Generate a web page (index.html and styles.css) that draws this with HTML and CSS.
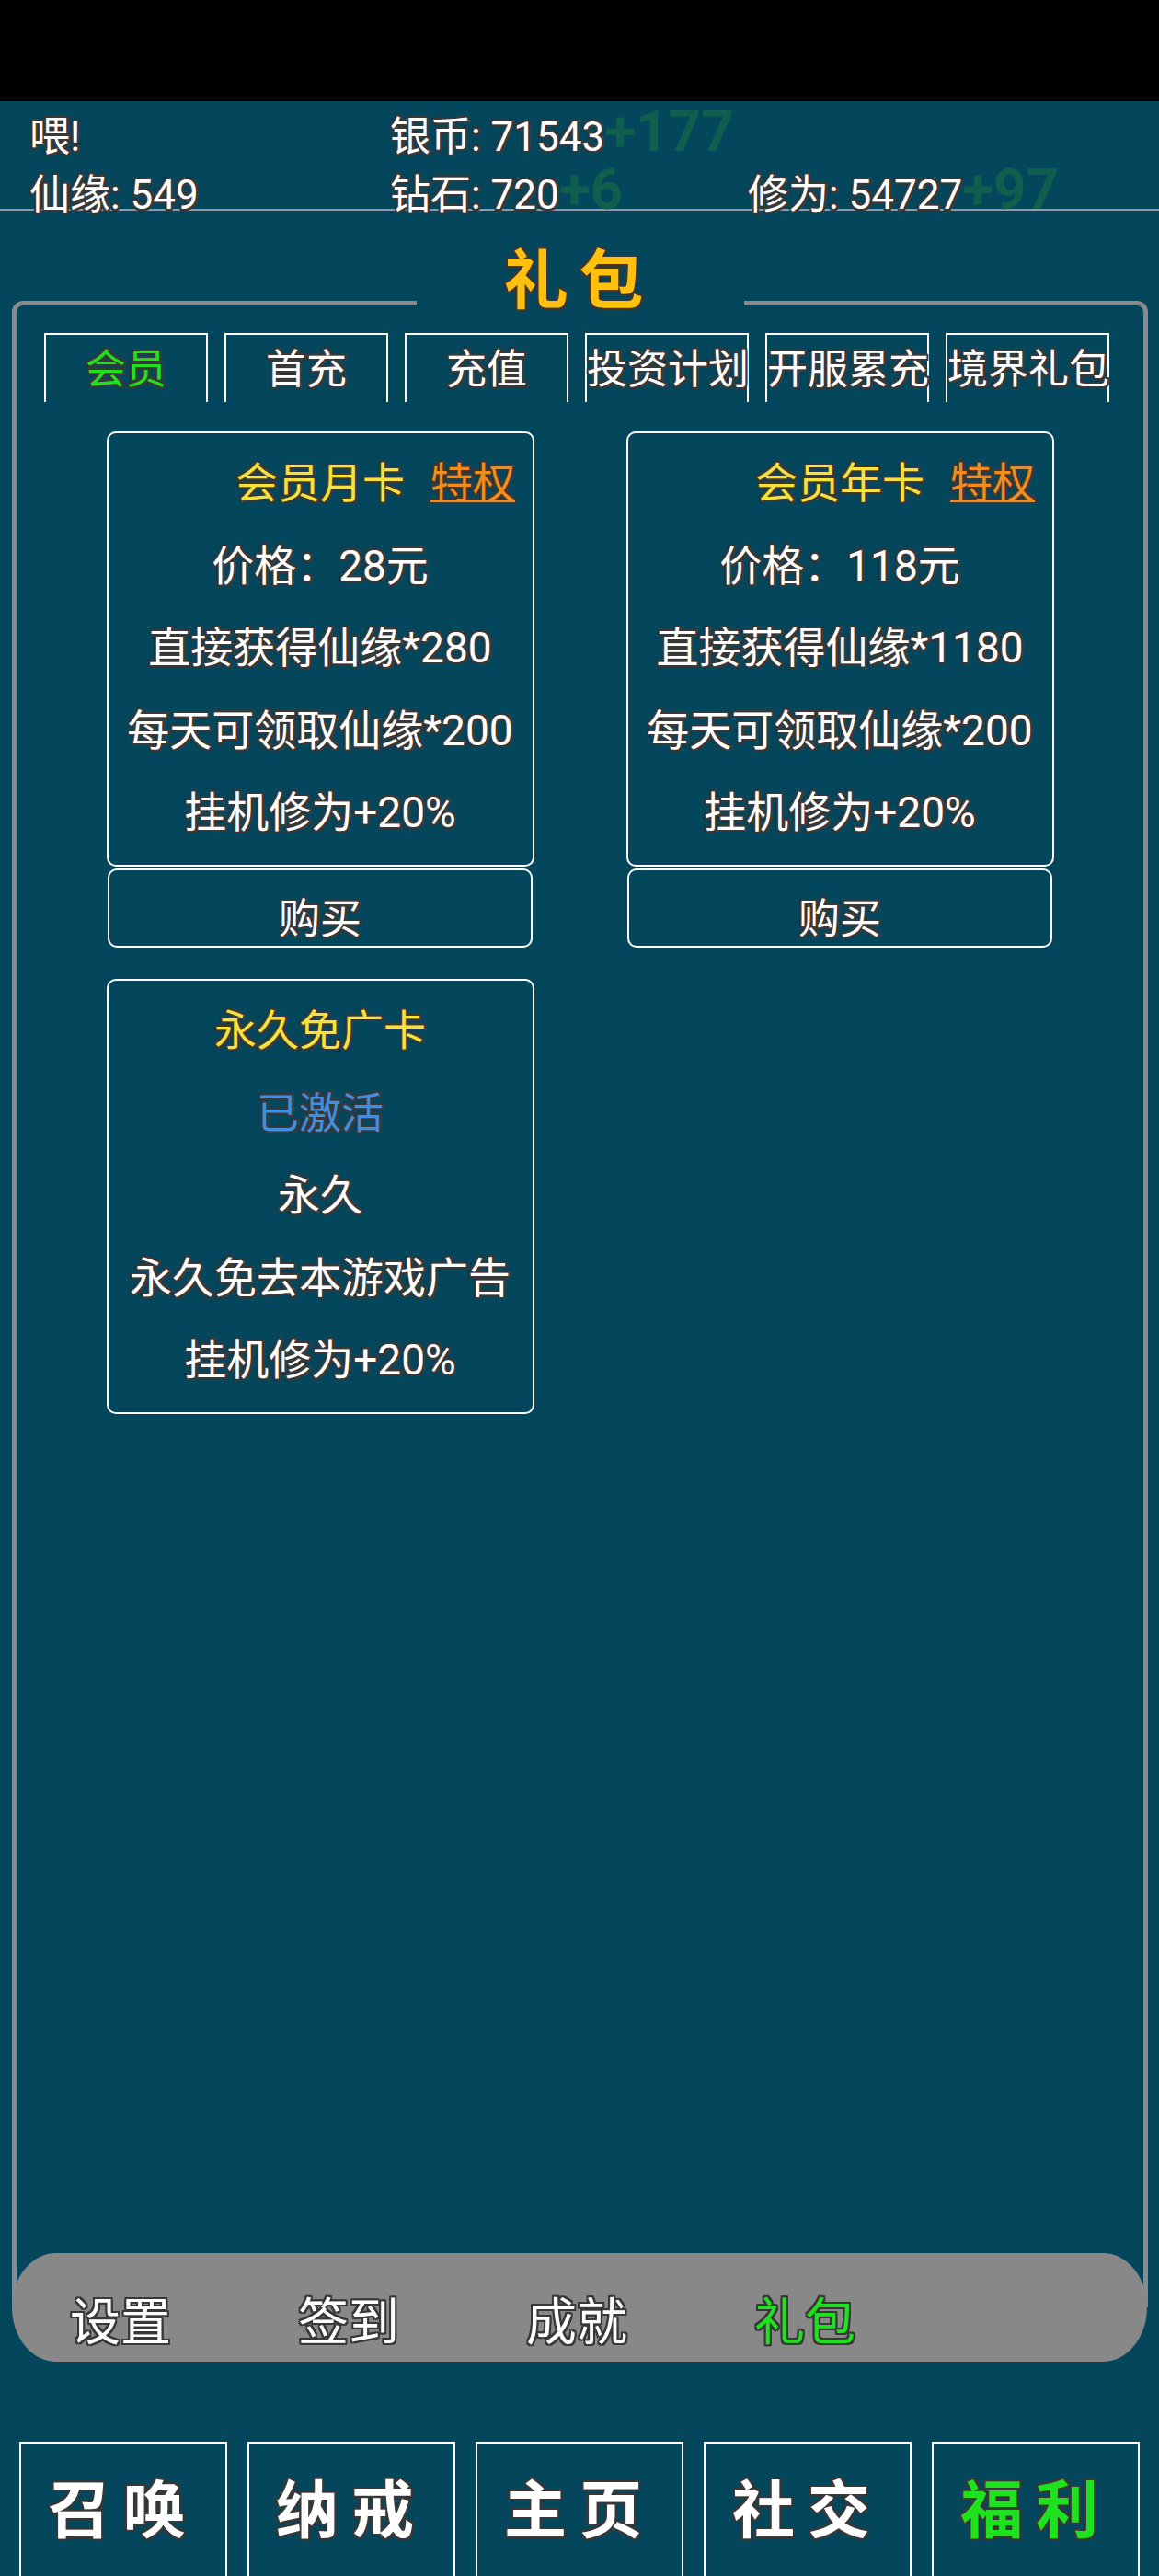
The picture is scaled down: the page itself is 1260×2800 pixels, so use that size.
FILE: index.html
```html
<!DOCTYPE html>
<html lang="zh-CN">
<head>
<meta charset="utf-8">
<title>礼包</title>
<link rel="stylesheet" href="styles.css">
</head>
<body>
<div class="statusbar"></div>

<header class="hud">
  <div class="hud-cell ol">喂!</div>
  <div class="hud-cell ol">银币: 71543<span class="gain">+177</span></div>
  <div class="hud-cell"></div>
  <div class="hud-cell ol">仙缘: 549</div>
  <div class="hud-cell ol">钻石: 720<span class="gain">+6</span></div>
  <div class="hud-cell ol">修为: 54727<span class="gain">+97</span></div>
</header>

<main class="panel">
  <h1 class="panel-title ol">礼 包</h1>

  <nav class="tabs">
    <div class="tab ol active">会员</div>
    <div class="tab ol">首充</div>
    <div class="tab ol">充值</div>
    <div class="tab ol">投资计划</div>
    <div class="tab ol">开服累充</div>
    <div class="tab ol">境界礼包</div>
  </nav>

  <section class="cards">
    <div class="offer">
      <div class="card ol">
        <div class="line"><span class="name yellow">会员月卡<span class="badge">特权</span></span></div>
        <div class="line">价格：28元</div>
        <div class="line">直接获得仙缘*280</div>
        <div class="line">每天可领取仙缘*200</div>
        <div class="line">挂机修为+20%</div>
      </div>
      <div class="buy ol">购买</div>
    </div>

    <div class="offer">
      <div class="card ol">
        <div class="line"><span class="name yellow">会员年卡<span class="badge">特权</span></span></div>
        <div class="line">价格：118元</div>
        <div class="line">直接获得仙缘*1180</div>
        <div class="line">每天可领取仙缘*200</div>
        <div class="line">挂机修为+20%</div>
      </div>
      <div class="buy ol">购买</div>
    </div>

    <div class="offer">
      <div class="card ol">
        <div class="line yellow">永久免广卡</div>
        <div class="line blue">已激活</div>
        <div class="line">永久</div>
        <div class="line">永久免去本游戏广告</div>
        <div class="line">挂机修为+20%</div>
      </div>
    </div>
  </section>

  <div class="subnav">
    <span class="sub ol">设置</span>
    <span class="sub ol">签到</span>
    <span class="sub ol">成就</span>
    <span class="sub ol green">礼包</span>
  </div>
</main>

<footer class="bottomnav">
  <div class="navbox ol">召唤</div>
  <div class="navbox ol">纳戒</div>
  <div class="navbox ol">主页</div>
  <div class="navbox ol">社交</div>
  <div class="navbox ol green">福利</div>
</footer>
</body>
</html>
```

FILE: styles.css
```css
html, body {
  margin: 0;
  padding: 0;
}

body {
  background: #04465b;
  height: 2800px;
  overflow: hidden;
  font-family: Roboto, "Noto Sans CJK SC", sans-serif;
  color: #ffffff;
}

.ol {
  text-shadow:
    -2px -2px 0 #383838, 2px -2px 0 #383838,
    -2px 2px 0 #383838, 2px 2px 0 #383838,
    0 -2px 0 #383838, 0 2px 0 #383838,
    -2px 0 0 #383838, 2px 0 0 #383838;
}

.yellow { color: #f7e13b; }
.blue { color: #3e8fe0; }
.green { color: #1fe21f; }

.statusbar {
  height: 110px;
  background: #000000;
}

/* top resource display */
.hud {
  height: 104px;
  padding: 13px 0 0 32px;
  border-bottom: 2px solid #8a9ea8;
  display: grid;
  grid-template-columns: 392px 389px auto;
  grid-template-rows: 63px 57px;
  font-size: 44px;
  line-height: 52.9px;
  white-space: nowrap;
}

.hud-cell {
  position: relative;
}

.gain {
  font-size: 62px;
  font-weight: 700;
  line-height: 0;
  color: #0f5e4e;
  text-shadow: none;
}

/* main panel */
.panel {
  position: relative;
  margin: 98px 12px 0 13px;
  height: 2176px;
  border: 5px solid #8a8a8a;
  border-bottom: 0;
  border-radius: 12px 12px 0 0;
}

.panel-title {
  position: absolute;
  top: -61px;
  left: 50%;
  box-sizing: border-box;
  width: 356px;
  margin: 0 0 0 -178px;
  padding-right: 14px;
  background: #04465b;
  text-align: center;
  font-size: 70px;
  font-weight: 700;
  line-height: 70px;
  word-spacing: -6px;
  color: #ffc10d;
}

.tabs {
  display: flex;
  gap: 18px;
  margin-top: 30px;
  padding-left: 30px;
}

.tab {
  box-sizing: border-box;
  width: 178px;
  height: 75px;
  padding-top: 16px;
  border: 2px solid #ffffff;
  border-bottom: 0;
  text-align: center;
  font-size: 44px;
  line-height: 44px;
  white-space: nowrap;
}

.tab.active {
  color: #1fe21f;
}

.cards {
  display: grid;
  grid-template-columns: 465px 465px;
  justify-content: center;
  column-gap: 100px;
  row-gap: 34px;
  margin-top: 32px;
}

.card {
  box-sizing: border-box;
  height: 473px;
  padding-top: 10px;
  border: 2px solid #ffffff;
  border-radius: 10px;
  text-align: center;
  font-size: 46px;
  line-height: 89.5px;
  white-space: nowrap;
}

.name {
  display: inline-block;
  position: relative;
}

.badge {
  position: absolute;
  top: 0;
  left: calc(100% + 28px);
  color: #f28c1a;
  text-decoration: underline;
  text-decoration-thickness: 2px;
  text-underline-offset: 3px;
}

.buy {
  box-sizing: border-box;
  width: 462px;
  height: 86px;
  margin: 2px auto 0;
  padding-top: 31px;
  border: 2px solid #ffffff;
  border-radius: 10px;
  text-align: center;
  font-size: 45px;
  line-height: 45px;
}

/* secondary nav bar overlapping the panel bottom */
.subnav {
  position: absolute;
  left: -5px;
  bottom: -59px;
  width: 1234px;
  height: 118px;
  box-sizing: border-box;
  padding: 48px 0 0 63px;
  background: #888888;
  border-radius: 48px / 59px;
  display: flex;
  gap: 138px;
  font-size: 55px;
  line-height: 55px;
}

.sub {
  white-space: nowrap;
}

/* bottom navigation */
.bottomnav {
  display: flex;
  justify-content: center;
  gap: 22px;
  margin-top: 146px;
}

.navbox {
  box-sizing: border-box;
  width: 226px;
  height: 160px;
  padding-top: 40px;
  border: 2px solid #ffffff;
  border-bottom: 0;
  text-align: center;
  font-size: 68px;
  font-weight: 700;
  line-height: 68px;
  letter-spacing: 14px;
  white-space: nowrap;
}
```
